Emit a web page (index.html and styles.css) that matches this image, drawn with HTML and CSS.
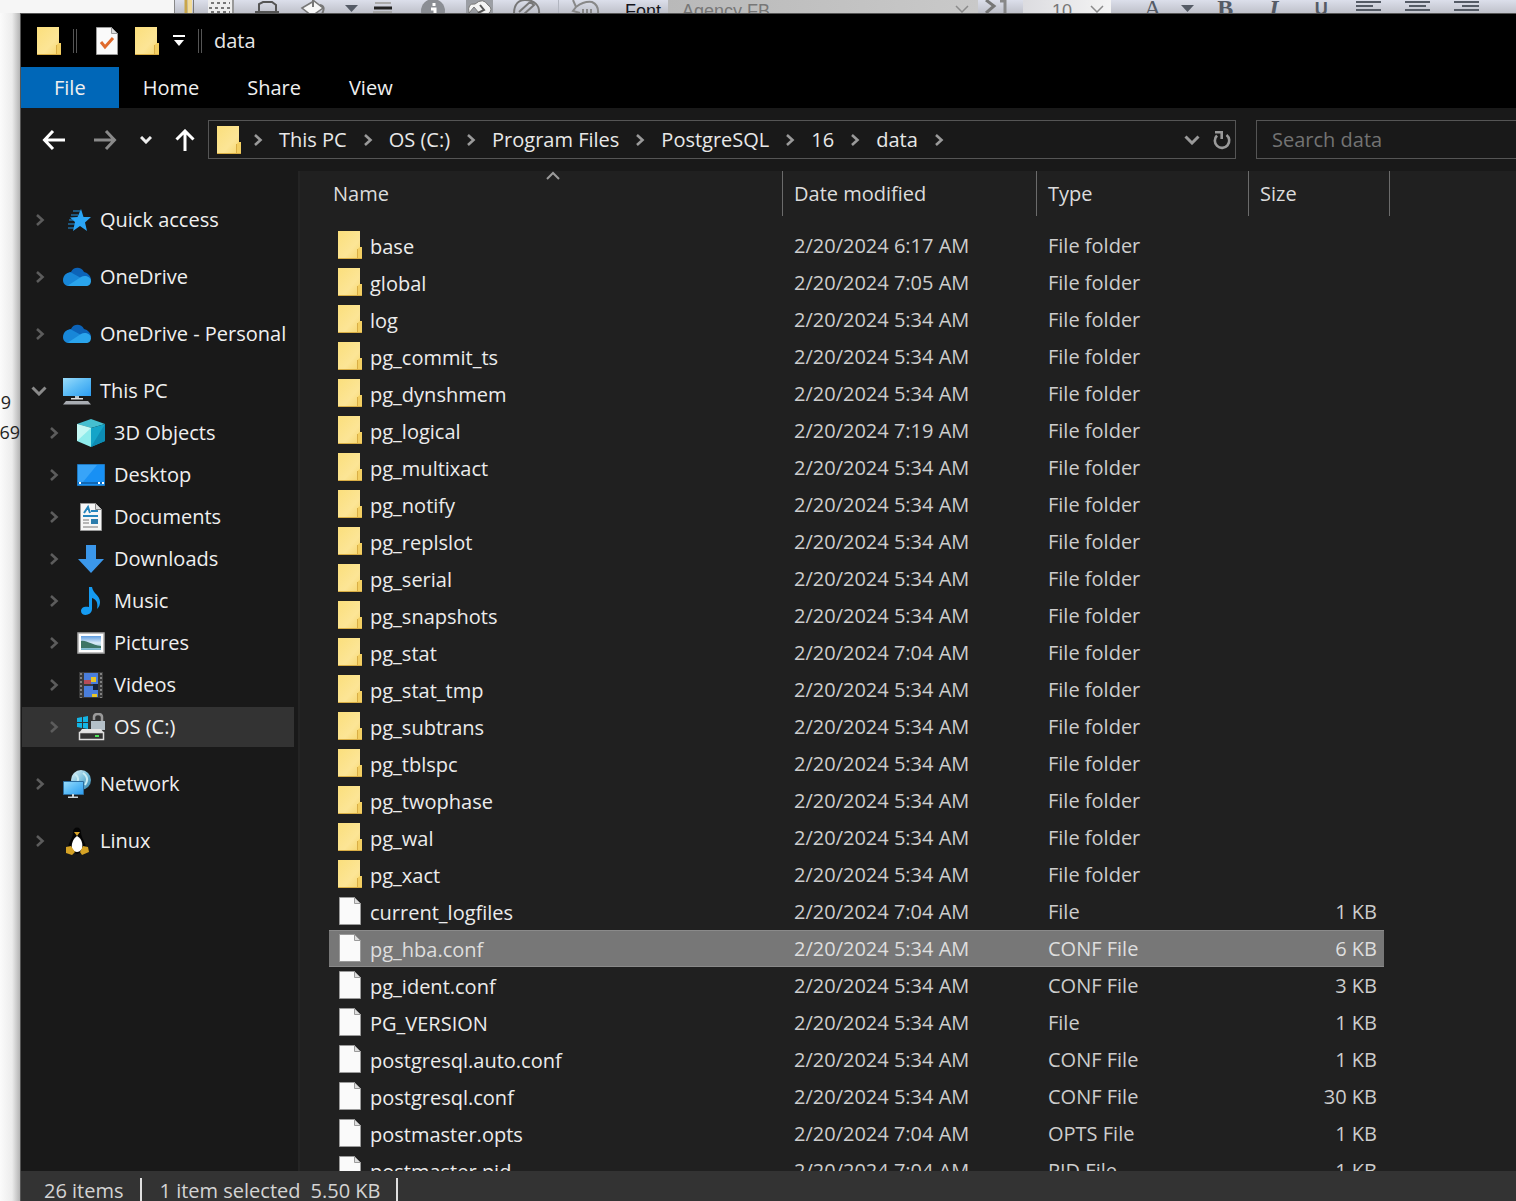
FILE: index.html
```html
<!DOCTYPE html>
<html lang="en">
<head>
<meta charset="utf-8">
<title>data</title>
<link rel="stylesheet" href="styles.css">
</head>
<body>
<svg class="defs" aria-hidden="true">
  <defs>
    <linearGradient id="g-folder" x1="0" y1="0" x2="1" y2="1"><stop offset="0" stop-color="#fbdf7c"/><stop offset=".6" stop-color="#fce596"/><stop offset="1" stop-color="#f5d56c"/></linearGradient>
    <linearGradient id="g-screen" x1="0" y1="0" x2="1" y2="1"><stop offset="0" stop-color="#9adcfb"/><stop offset=".5" stop-color="#5cbcf6"/><stop offset="1" stop-color="#2c9cf0"/></linearGradient>
    <linearGradient id="g-globe" x1="0" y1="0" x2="1" y2="1"><stop offset="0" stop-color="#e6f6fc"/><stop offset=".5" stop-color="#7cc0dc"/><stop offset="1" stop-color="#2f7fa8"/></linearGradient>
    <linearGradient id="g-photo" x1="0" y1="0" x2="0" y2="1"><stop offset="0" stop-color="#5f9de0"/><stop offset=".5" stop-color="#dcecf8"/><stop offset="1" stop-color="#6fb0c8"/></linearGradient>
    <symbol id="folder" viewBox="0 0 24 28"><path d="M0 0H22V16H24V28H0Z" fill="url(#g-folder)"/><path d="M22 16 19.500 18V28H24V16Z" fill="#f3cf62"/><path d="M19.500 18V28M0 27.500H24" stroke="#d9ae45" fill="none"/></symbol>
    <symbol id="file" viewBox="0 0 22 28"><path d="M.5.500H15.500L21.500 6.500V27.500H.5Z" fill="#fafafa" stroke="#9a9a9a"/><path d="M15.500.500V6.500H21.500Z" fill="#ddd" stroke="#9a9a9a"/></symbol>
    <symbol id="chev" viewBox="0 0 10 14"><path d="M2 2 7.500 7 2 12" fill="none" stroke="currentColor" stroke-width="2.600"/></symbol>
    <symbol id="down" viewBox="0 0 16 10"><path d="M1.500 1.500 8 8 14.500 1.500" fill="none" stroke="currentColor" stroke-width="3"/></symbol>
    <symbol id="cloud" viewBox="0 0 28 20"><path d="M3 12C3 6 6 5 8 5 10 0 18-1 21 5 25 6 28 9 28 13H3Z" fill="#0c63b8"/><path d="M0 13C0 8 4 5 8 5.500L20 12 10 19H6C3 19 0 17 0 13Z" fill="#1887d8"/><path d="M5 18.500 18 10C21 8 28 9 28 14 28 17 26 19 23 19H7Z" fill="#2aa4ec"/></symbol>
    <symbol id="pc" viewBox="0 0 28 28"><path d="M0 1H28V19H0Z" fill="url(#g-screen)"/><path d="M12 19H16V22H12Z" fill="#b8c4cc"/><path d="M8 21H20V22.500H8Z" fill="#ddd"/><path d="M3 24H25L28 27.500H0Z" fill="#a9adb3"/></symbol>
  </defs>
</svg>

<header class="editor-bar" aria-label="Editor toolbar">
  <svg class="editor-icons" width="434" height="22" viewBox="174 0 434 22" aria-hidden="true">
    <path d="M174.500 0V22" stroke="#888"/><path d="M186 0V22" stroke="#c9a64a" stroke-width="3"/><path d="M190 0V22" stroke="#f3dc98" stroke-width="4"/><path d="M193.500 0V22" stroke="#777"/>
    <path d="M208 0H232V22H208Z" fill="#eee"/><path d="M211 3H230M209 8H232M211 12H230" stroke="#777" stroke-width="2" stroke-dasharray="3 3"/><path d="M233 0V22" stroke="#999" stroke-width="2"/>
    <path d="M259 13V4L263 2H272L276 5V13M255 12H279" fill="none" stroke="#555" stroke-width="2"/>
    <path d="M302 8 314 1 323 8 312 16Z" fill="#f8f8f8" stroke="#777" stroke-width="1.500"/><path d="M313 0V7M320 5Q326 6 322 14" stroke="#777" stroke-width="2" fill="none"/>
    <path d="M345 5H358L351.500 12Z" fill="#555b66"/>
    <path d="M375 3H391M373 12H392" stroke="#aaa" stroke-width="2"/><path d="M374 8H392" stroke="#222" stroke-width="3"/>
    <circle cx="433" cy="11" r="12" fill="#8b8e94"/><path d="M434 3V6M431 9H435V18" stroke="#fff" stroke-width="3" fill="none"/>
    <rect x="466" y="0" width="27" height="22" fill="#9b9ea4"/><path d="M469 13Q467 3 475 4 483-3 488 5 494 9 488 14L479 13 474 7Z" fill="#f4f4f4" stroke="#777"/><path d="M480 5 484 10 478 13" fill="none" stroke="#555" stroke-width="2"/>
    <path d="M514 14C514 4 519 0 525 0 534 0 540 5 539 14M519 12 530 2 534 5 523 15" fill="none" stroke="#777" stroke-width="2"/>
    <path d="M558.500 0V22" stroke="#b2b6c0"/><path d="M573 0 576 7Q584 1 592 2 599 5 598 14M576 7 573 11 580 13" fill="none" stroke="#888" stroke-width="2"/><path d="M582 11H594" stroke="#888" stroke-width="4" stroke-dasharray="2 2"/>
  </svg>
  <label class="font-label" for="font">Font</label>
  <span class="combo combo-font"><select id="font" disabled><option>Agency FB</option></select><svg width="14" height="8" viewBox="0 0 14 8"><path d="M1 1 7 7 13 1" fill="none" stroke="#8b8b8b" stroke-width="1.500"/></svg></span>
  <svg class="step" width="44" height="22" viewBox="0 0 44 22" aria-hidden="true"><path d="M5 0 13 6 5 13" fill="none" stroke="#777" stroke-width="3"/><path d="M19 1H24V22H19" fill="none" stroke="#888" stroke-width="3"/></svg>
  <span class="combo combo-size"><select aria-label="Font size"><option>10</option></select><svg width="14" height="8" viewBox="0 0 14 8"><path d="M1 1 7 7 13 1" fill="none" stroke="#8b8b8b" stroke-width="1.500"/></svg></span>
  <div class="format">
    <button class="fmt fmt-a">A</button>
    <button class="fmt" aria-label="Colour menu"><svg width="13" height="22" viewBox="0 0 13 22"><path d="M0 5H13L6.500 12Z" fill="#555b66"/></svg></button>
    <button class="fmt fmt-b">B</button>
    <button class="fmt fmt-i">I</button>
    <button class="fmt fmt-u">U</button>
    <button class="fmt fmt-align" aria-label="Align left"><svg width="25" height="22"><path d="M0 2H25M0 6H17M0 10H25M0 14H17" stroke="#555b66" stroke-width="2"/></svg></button>
    <button class="fmt fmt-align" aria-label="Centre"><svg width="25" height="22"><path d="M0 2H25M4 6H21M0 10H25M4 14H21" stroke="#555b66" stroke-width="2"/></svg></button>
    <button class="fmt fmt-align" aria-label="Align right"><svg width="25" height="22"><path d="M0 2H25M8 6H25M0 10H25M8 14H25" stroke="#555b66" stroke-width="2"/></svg></button>
  </div>
</header>

<div class="desk">
  <aside class="behind"><span>9</span><span>.69</span></aside>

  <div class="window">
    <div class="titlebar">
      <svg width="24" height="28"><use href="#folder"/></svg>
      <i class="grip"></i>
      <button class="plain quick-props" aria-label="Properties"><svg width="22" height="28" viewBox="0 0 22 28"><use href="#file" width="22" height="28"/><path d="M5 15 9 20 17 11" fill="none" stroke="#e06a2c" stroke-width="3"/></svg></button>
      <button class="plain quick-new" aria-label="New folder"><svg width="24" height="28"><use href="#folder"/></svg></button>
      <button class="plain" aria-label="Customize toolbar"><svg width="14" height="12" viewBox="0 0 14 12"><path d="M1 1H13" stroke="#fff" stroke-width="2"/><path d="M2 5H12L7 11Z" fill="#fff"/></svg></button>
      <i class="grip"></i>
      <h1 class="title">data</h1>
    </div>

    <nav class="tabs" aria-label="Ribbon">
      <button class="tab tab-file">File</button>
      <button class="tab">Home</button>
      <button class="tab">Share</button>
      <button class="tab">View</button>
    </nav>

    <div class="navbar">
      <div class="arrows">
        <button class="plain" aria-label="Back"><svg width="24" height="22" viewBox="0 0 24 22"><path d="M11 2 2.500 11 11 20M2 11H23" fill="none" stroke="#fff" stroke-width="3"/></svg></button>
        <button class="plain" aria-label="Forward"><svg width="24" height="22" viewBox="0 0 24 22"><path d="M13 2 21.500 11 13 20M22 11H1" fill="none" stroke="#8a8a8a" stroke-width="3"/></svg></button>
        <button class="plain recent" aria-label="Recent locations"><svg width="12" height="8" viewBox="0 0 12 8"><path d="M1 1 6 6 11 1" fill="none" stroke="#eee" stroke-width="3"/></svg></button>
        <button class="plain" aria-label="Up"><svg width="20" height="22" viewBox="0 0 20 22"><path d="M1.500 10.500 10 2 18.500 10.500M10 2V22" fill="none" stroke="#fff" stroke-width="3"/></svg></button>
      </div>
      <div class="address">
        <svg class="place" width="24" height="28"><use href="#folder"/></svg>
        <svg class="sep" width="10" height="14"><use href="#chev"/></svg><a href="#">This PC</a>
        <svg class="sep" width="10" height="14"><use href="#chev"/></svg><a href="#">OS (C:)</a>
        <svg class="sep" width="10" height="14"><use href="#chev"/></svg><a href="#">Program Files</a>
        <svg class="sep" width="10" height="14"><use href="#chev"/></svg><a href="#">PostgreSQL</a>
        <svg class="sep" width="10" height="14"><use href="#chev"/></svg><a href="#">16</a>
        <svg class="sep" width="10" height="14"><use href="#chev"/></svg><a href="#">data</a>
        <svg class="sep" width="10" height="14"><use href="#chev"/></svg>
        <div class="address-tools">
          <button class="plain" aria-label="Previous locations"><svg width="16" height="10"><use href="#down"/></svg></button>
          <button class="plain" aria-label="Refresh"><svg width="18" height="20" viewBox="0 0 18 20"><path d="M13.500 5A7.200 7.200 0 1 1 4 5.500" fill="none" stroke="currentColor" stroke-width="2.600"/><path d="M2 2.300H8.700V9" fill="none" stroke="currentColor" stroke-width="2.600"/></svg></button>
        </div>
      </div>
      <input class="search" type="search" placeholder="Search data" aria-label="Search data">
    </div>

    <div class="main">
      <nav class="tree" aria-label="Folders">
        <ul class="roots">
          <li><a href="#" class="node"><svg class="tw" width="10" height="14"><use href="#chev"/></svg><svg class="ic" viewBox="0 0 28 28"><path d="M18 3 20.500 11H28L22 16.500 24 25 17 20 10 25 12 16 7 11.500 14.500 11Z" fill="#2ba6f7"/><path d="M10 5H17M8 9H15M6 14H11M5 18H12M5 22H11" stroke="#2594e0"/></svg>Quick access</a></li>
          <li><a href="#" class="node"><svg class="tw" width="10" height="14"><use href="#chev"/></svg><svg class="ic" viewBox="0 -4 28 28"><use href="#cloud" width="28" height="20"/></svg>OneDrive</a></li>
          <li><a href="#" class="node"><svg class="tw" width="10" height="14"><use href="#chev"/></svg><svg class="ic" viewBox="0 -4 28 28"><use href="#cloud" width="28" height="20"/></svg>OneDrive - Personal</a></li>
          <li><a href="#" class="node open"><svg class="tw" width="16" height="10"><use href="#down"/></svg><svg class="ic"><use href="#pc"/></svg>This PC</a>
            <ul class="kids">
              <li><a href="#" class="node"><svg class="tw" width="10" height="14"><use href="#chev"/></svg><svg class="ic" viewBox="0 0 28 28"><path d="M0 5 14 0 28 5 14 9Z" fill="#45bfd0"/><path d="M0 5 14 9V28L0 22Z" fill="#8eecec"/><path d="M0 5 14 9 0 22Z" fill="#c4f8f4"/><path d="M28 5 14 9V28L28 22Z" fill="#14a4c8"/><path d="M28 5 14 28 28 22Z" fill="#0d8cb4"/></svg>3D Objects</a></li>
              <li><a href="#" class="node"><svg class="tw" width="10" height="14"><use href="#chev"/></svg><svg class="ic" viewBox="0 0 28 28"><path d="M.5 3.500H27.500V24.500H.5Z" fill="#1890f4" stroke="#1e78c0"/><path d="M1 4H20L6 21H1Z" fill="#38a4f8"/><path d="M1 22H27" stroke="#1268b4" stroke-width="2"/><path d="M2 22H4M21 22H23M25 22H27" stroke="#fff" stroke-width="2"/></svg>Desktop</a></li>
              <li><a href="#" class="node"><svg class="tw" width="10" height="14"><use href="#chev"/></svg><svg class="ic" viewBox="0 0 28 28"><path d="M3.500.500H18.500L24.500 6.500V27.500H3.500Z" fill="#f6f6f6" stroke="#999"/><path d="M18.500.500V6.500H24.500" fill="#ddd" stroke="#888"/><path d="M7 10 11 4 13 10M6 13H21M14 8H21" stroke="#2484bc" stroke-width="2" fill="none"/><path d="M6 17H12M6 20H12M6 24H21" stroke="#777"/><path d="M14 16H21V21H14Z" fill="#2b7cac"/></svg>Documents</a></li>
              <li><a href="#" class="node"><svg class="tw" width="10" height="14"><use href="#chev"/></svg><svg class="ic" viewBox="0 0 28 28"><path d="M9 0H19V14H27L14 28 1 14H9Z" fill="#3b97ea"/></svg>Downloads</a></li>
              <li><a href="#" class="node"><svg class="tw" width="10" height="14"><use href="#chev"/></svg><svg class="ic" viewBox="0 0 28 28"><path d="M12 0H15C16 7 23 8 23 15 23 18 22 20 20 22 21 16 20 13 15 11V22C15 29 4 30 4 24 4 20 8 19 12 20Z" fill="#159bf2"/></svg>Music</a></li>
              <li><a href="#" class="node"><svg class="tw" width="10" height="14"><use href="#chev"/></svg><svg class="ic" viewBox="0 0 28 28"><path d="M1 4H27V24H1Z" fill="#fff" stroke="#aaa" stroke-width="1.500"/><path d="M4 7H24V21H4Z" fill="url(#g-photo)"/><path d="M4 12C10 11 14 16 24 17V19H4Z" fill="#3d7566"/></svg>Pictures</a></li>
              <li><a href="#" class="node"><svg class="tw" width="10" height="14"><use href="#chev"/></svg><svg class="ic" viewBox="0 0 28 28"><path d="M2 1H26V27H2Z" fill="#3a3a3a"/><path d="M4 2V27M24 2V27" stroke="#999" stroke-width="1.500" stroke-dasharray="2 2"/><path d="M7 2H21V13H7ZM7 15H21V26H7Z" fill="#4a7edc"/><path d="M7 9H14V13H7Z" fill="#b54c58"/><path d="M14 6H19V11H14ZM15 23H20V26H15Z" fill="#e8c528"/><path d="M16 13H21V19H16Z" fill="#17233c"/></svg>Videos</a></li>
              <li><a href="#" class="node selected" aria-current="true"><svg class="tw" width="10" height="14"><use href="#chev"/></svg><svg class="ic" viewBox="0 0 28 28"><path d="M0 5 5 4V9H0ZM6 4 11 3V9H6ZM0 10H5V15L0 14ZM6 10H11V16L6 15Z" fill="#14b4e4"/><path d="M17 7V4C17 0 25 0 25 4V9" fill="none" stroke="#9a9a9a" stroke-width="2.500"/><path d="M14 8H28V17H14Z" fill="#b4c0c8"/><path d="M5 16H24L27 20H2Z" fill="#e4e4e4"/><path d="M2.500 19.500H26.500V26.500H2.500Z" fill="#333" stroke="#ddd" stroke-width="1.500"/><path d="M18 23H22" stroke="#4ee45a" stroke-width="2"/></svg>OS (C:)</a></li>
            </ul>
          </li>
          <li><a href="#" class="node"><svg class="tw" width="10" height="14"><use href="#chev"/></svg><svg class="ic" viewBox="0 0 28 28"><circle cx="18" cy="10" r="10" fill="url(#g-globe)"/><path d="M12 4Q17 8 14 12M20 3Q27 8 22 15" stroke="#c9ecf4" stroke-width="2" fill="none"/><path d="M.5 11.500H20.500V24.500H.5Z" fill="url(#g-screen)" stroke="#2c6ea0"/><path d="M10 24V27M5 27.500H15" stroke="#c8d4da" stroke-width="2"/></svg>Network</a></li>
          <li><a href="#" class="node"><svg class="tw" width="10" height="14"><use href="#chev"/></svg><svg class="ic" viewBox="0 0 28 28"><path d="M10 5C10-1 18-1 18 5 18 11 23 15 23 22L14 27 5 22C5 15 10 12 10 5Z" fill="#050505"/><path d="M14 9C19 12 20 17 19 22 16 26 12 26 9 22 8 17 10 12 14 9Z" fill="#fff"/><path d="M11 5H17L14 9Z" fill="#d9a52a"/><path d="M3 20 8 19 12 25 9 28 3 26ZM25 20 20 19 17 25 19 28 26 25Z" fill="#d6a325"/></svg>Linux</a></li>
        </ul>
      </nav>

      <div class="list">
        <table class="files">
          <colgroup><col class="c-name"><col class="c-date"><col class="c-type"><col class="c-size"><col class="c-end"></colgroup>
          <thead>
            <tr>
              <th><button class="head head-name">Name<svg class="sorted" width="16" height="9" viewBox="0 0 16 9"><path d="M2 8 8 2 14 8" fill="none" stroke="#9a9a9a" stroke-width="2"/></svg></button></th>
              <th><button class="head">Date modified</button></th>
              <th><button class="head">Type</button></th>
              <th colspan="2"><button class="head">Size</button></th>
            </tr>
          </thead>
          <tbody>
            <tr><td><svg class="fi" width="24" height="28"><use href="#folder"/></svg>base</td><td>2/20/2024 6:17 AM</td><td>File folder</td><td></td></tr>
            <tr><td><svg class="fi" width="24" height="28"><use href="#folder"/></svg>global</td><td>2/20/2024 7:05 AM</td><td>File folder</td><td></td></tr>
            <tr><td><svg class="fi" width="24" height="28"><use href="#folder"/></svg>log</td><td>2/20/2024 5:34 AM</td><td>File folder</td><td></td></tr>
            <tr><td><svg class="fi" width="24" height="28"><use href="#folder"/></svg>pg_commit_ts</td><td>2/20/2024 5:34 AM</td><td>File folder</td><td></td></tr>
            <tr><td><svg class="fi" width="24" height="28"><use href="#folder"/></svg>pg_dynshmem</td><td>2/20/2024 5:34 AM</td><td>File folder</td><td></td></tr>
            <tr><td><svg class="fi" width="24" height="28"><use href="#folder"/></svg>pg_logical</td><td>2/20/2024 7:19 AM</td><td>File folder</td><td></td></tr>
            <tr><td><svg class="fi" width="24" height="28"><use href="#folder"/></svg>pg_multixact</td><td>2/20/2024 5:34 AM</td><td>File folder</td><td></td></tr>
            <tr><td><svg class="fi" width="24" height="28"><use href="#folder"/></svg>pg_notify</td><td>2/20/2024 5:34 AM</td><td>File folder</td><td></td></tr>
            <tr><td><svg class="fi" width="24" height="28"><use href="#folder"/></svg>pg_replslot</td><td>2/20/2024 5:34 AM</td><td>File folder</td><td></td></tr>
            <tr><td><svg class="fi" width="24" height="28"><use href="#folder"/></svg>pg_serial</td><td>2/20/2024 5:34 AM</td><td>File folder</td><td></td></tr>
            <tr><td><svg class="fi" width="24" height="28"><use href="#folder"/></svg>pg_snapshots</td><td>2/20/2024 5:34 AM</td><td>File folder</td><td></td></tr>
            <tr><td><svg class="fi" width="24" height="28"><use href="#folder"/></svg>pg_stat</td><td>2/20/2024 7:04 AM</td><td>File folder</td><td></td></tr>
            <tr><td><svg class="fi" width="24" height="28"><use href="#folder"/></svg>pg_stat_tmp</td><td>2/20/2024 5:34 AM</td><td>File folder</td><td></td></tr>
            <tr><td><svg class="fi" width="24" height="28"><use href="#folder"/></svg>pg_subtrans</td><td>2/20/2024 5:34 AM</td><td>File folder</td><td></td></tr>
            <tr><td><svg class="fi" width="24" height="28"><use href="#folder"/></svg>pg_tblspc</td><td>2/20/2024 5:34 AM</td><td>File folder</td><td></td></tr>
            <tr><td><svg class="fi" width="24" height="28"><use href="#folder"/></svg>pg_twophase</td><td>2/20/2024 5:34 AM</td><td>File folder</td><td></td></tr>
            <tr><td><svg class="fi" width="24" height="28"><use href="#folder"/></svg>pg_wal</td><td>2/20/2024 5:34 AM</td><td>File folder</td><td></td></tr>
            <tr><td><svg class="fi" width="24" height="28"><use href="#folder"/></svg>pg_xact</td><td>2/20/2024 5:34 AM</td><td>File folder</td><td></td></tr>
            <tr><td><svg class="fi" width="22" height="28"><use href="#file"/></svg>current_logfiles</td><td>2/20/2024 7:04 AM</td><td>File</td><td>1 KB</td></tr>
            <tr class="picked"><td><svg class="fi" width="22" height="28"><use href="#file"/></svg>pg_hba.conf</td><td>2/20/2024 5:34 AM</td><td>CONF File</td><td>6 KB</td></tr>
            <tr><td><svg class="fi" width="22" height="28"><use href="#file"/></svg>pg_ident.conf</td><td>2/20/2024 5:34 AM</td><td>CONF File</td><td>3 KB</td></tr>
            <tr><td><svg class="fi" width="22" height="28"><use href="#file"/></svg>PG_VERSION</td><td>2/20/2024 5:34 AM</td><td>File</td><td>1 KB</td></tr>
            <tr><td><svg class="fi" width="22" height="28"><use href="#file"/></svg>postgresql.auto.conf</td><td>2/20/2024 5:34 AM</td><td>CONF File</td><td>1 KB</td></tr>
            <tr><td><svg class="fi" width="22" height="28"><use href="#file"/></svg>postgresql.conf</td><td>2/20/2024 5:34 AM</td><td>CONF File</td><td>30 KB</td></tr>
            <tr><td><svg class="fi" width="22" height="28"><use href="#file"/></svg>postmaster.opts</td><td>2/20/2024 7:04 AM</td><td>OPTS File</td><td>1 KB</td></tr>
            <tr><td><svg class="fi" width="22" height="28"><use href="#file"/></svg>postmaster.pid</td><td>2/20/2024 7:04 AM</td><td>PID File</td><td>1 KB</td></tr>
          </tbody>
        </table>
      </div>
    </div>

    <footer class="status"><span class="count">26 items</span><span class="picked-count">1 item selected</span><span class="picked-size">5.50 KB</span></footer>
  </div>
</div>
</body>
</html>
```
FILE: styles.css
```css
* { box-sizing: border-box; }
body {
  margin: 0;
  height: 100vh;
  overflow: hidden;
  display: flex;
  flex-direction: column;
  background: #f6f6f6;
  color: #e8e8e8;
  font: 20px/26px "Open Sans", "Noto Sans", sans-serif;
}
svg { display: block; flex: none; }
button { font: inherit; color: inherit; border: 0; margin: 0; cursor: pointer; }
a { color: inherit; text-decoration: none; }
ul { list-style: none; margin: 0; padding: 0; }
.defs { position: absolute; width: 0; height: 0; }
.plain { background: none; padding: 0; display: flex; }

/* editor toolbar, mostly covered by the window */
.editor-bar {
  flex: none;
  height: 13px;
  overflow: hidden;
  display: flex;
  align-items: flex-start;
  margin-left: 174px;
  background: linear-gradient(#dcdfeb, #bfc1ca);
  color: #15151c;
  font: 18px/22px "Liberation Sans", Arial, sans-serif;
}
.font-label { width: 60px; padding-left: 17px; }
.combo { flex: none; display: flex; align-items: center; height: 22px; }
.combo select { flex: 1; appearance: none; border: 0; padding: 0; background: none; font: inherit; color: #777; opacity: 1; }
.combo svg { margin-top: -4px; }
.combo-font { width: 310px; padding: 0 9px 0 14px; background: linear-gradient(90deg, #b9b9b9, #c9c9c9); }
.step { margin: 0 8px 0 3px; }
.combo-size { width: 88px; padding: 0 7px 0 29px; background: linear-gradient(90deg, #dcdce0, #f4f4f4); margin-left: -10px; }
.format { display: flex; align-items: flex-start; margin-left: 25px; gap: 20px; color: #555b66; }
.fmt { display: flex; background: none; padding: 0; min-width: 16px; height: 22px; }
.fmt-a, .fmt-b, .fmt-i { font: 24px/16px "Liberation Serif", serif; }
.fmt-a { margin-left: 8px; }
.fmt-b { font-weight: 700; }
.fmt-i { font-style: italic; font-weight: 700; padding: 0 16px; }
.fmt-u { margin-right: 3px; font-weight: 700; line-height: 18px; }
.fmt-align { padding: 0 2px; }

.desk { flex: 1; min-height: 0; display: flex; }
.behind {
  flex: none;
  width: 20px;
  padding-top: 375px;
  overflow: hidden;
  display: flex;
  flex-direction: column;
  gap: 2px;
  align-items: flex-end;
  background: linear-gradient(90deg, #fbfbfb, #ececec 60%, #b4b4b4);
  color: #222;
  font-size: 18px;
  line-height: 28px;
}
.behind span:first-child { margin-right: 9px; }

.window {
  flex: 1;
  min-width: 0;
  display: flex;
  flex-direction: column;
  border: solid #555;
  border-width: 1px 0 0 1px;
  background: #191919;
}
.titlebar { height: 53px; display: flex; align-items: center; padding-left: 16px; background: #000; }
.grip { width: 4px; height: 24px; margin: 0 12px; border: solid #555; border-width: 0 1px; }
.quick-props { margin-left: 7px; }
.quick-new { margin: 0 13px 0 17px; }
.title { margin: 0; font-size: 20px; line-height: 26px; font-weight: 400; }

.tabs { height: 41px; display: flex; background: #000; }
.tab { padding: 0 24px; background: none; color: #f0f0f0; }
.tab-file { padding: 0 33px; background: #0067b8; }

.navbar { height: 63px; display: flex; align-items: center; }
.arrows { display: flex; align-items: center; width: 187px; padding: 0 13px 0 21px; justify-content: space-between; }
.recent { margin: 0 -4px; }
.address {
  flex: 1;
  height: 39px;
  display: flex;
  align-items: center;
  gap: 16px;
  padding: 0 4px 0 8px;
  border: 1px solid #555;
  white-space: nowrap;
}
.place { margin-right: -4px; }
.sep { color: #9a9a9a; }
.address-tools { margin-left: auto; display: flex; align-items: center; gap: 13px; color: #9a9a9a; }
.search {
  width: 260px;
  height: 39px;
  margin-left: 20px;
  padding: 0 15px;
  border: solid #555;
  border-width: 1px 0 1px 1px;
  border-radius: 0;
  background: #191919;
  color: #e8e8e8;
  font: inherit;
}
.search::placeholder { color: #737373; opacity: 1; }

.main { flex: 1; min-height: 0; display: flex; }
.tree { flex: none; width: 279px; padding: 28px 4px 0 1px; overflow: hidden; border-right: 2px solid #242424; white-space: nowrap; }
.roots { display: flex; flex-direction: column; gap: 15px; }
.tree li { display: flow-root; }
.node { display: flex; align-items: center; height: 40px; margin: 1px 0; padding-left: 13px; color: #f0f0f0; }
.tw { margin-right: 18px; color: #5c5c5c; }
.open .tw { margin: 0 16px 0 -4px; color: #8a8a8a; }
.ic { width: 28px; height: 28px; margin-right: 9px; }
.kids .node { padding-left: 27px; }
.selected { background: #333; }

.list { flex: 1; min-width: 0; overflow: hidden; padding-left: 29px; background: #202020; }
.files { table-layout: fixed; width: 1061px; border-collapse: collapse; }
.c-name { width: 454px; }
.c-date { width: 254px; }
.c-type { width: 212px; }
.c-size { width: 135px; }
.c-end { width: 6px; }
.files th { padding: 0 0 11px; font-weight: 400; text-align: left; }
.head { position: relative; display: block; width: 100%; height: 45px; padding: 0 11px; background: none; border-right: 1px solid #6b6b6b; color: #dcdcdc; text-align: left; }
.head-name { padding-left: 4px; }
.sorted { position: absolute; top: 0; left: 50%; margin-left: -11px; }
.files td { height: 37px; padding: 0 0 0 11px; color: #cdcdcd; white-space: nowrap; }
.files td:first-child { padding-left: 9px; color: #ececec; }
.files td:nth-child(4) { padding: 0 7px 0 0; text-align: right; }
.fi { display: inline-block; width: 24px; margin-right: 8px; vertical-align: -5px; }
.files .picked td { background: #777; color: #dedede; box-shadow: inset 0 1px #8a8a8a, inset 0 -1px #8a8a8a; }

.status { flex: none; height: 30px; padding: 7px 0 0 23px; display: flex; background: #333; color: #d4d4d4; white-space: nowrap; }
.status span { display: block; height: 26px; }
.count, .picked-size { padding-right: 16px; border-right: 2px solid #e0e0e0; }
.picked-count { padding: 0 10px 0 18px; }
```
